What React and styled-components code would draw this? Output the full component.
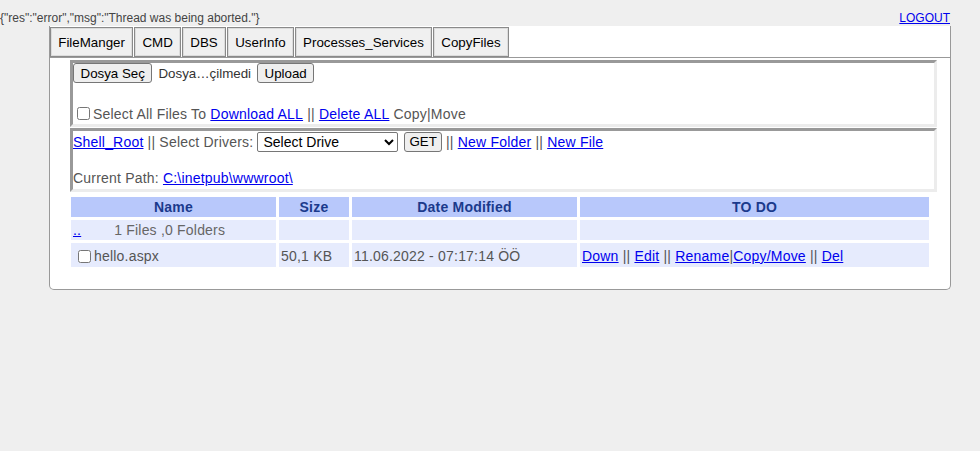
import React from "react";
import styled, { createGlobalStyle } from "styled-components";

const GlobalStyle = createGlobalStyle`
  html, body {
    margin: 0;
    padding: 0;
    background: #efefef;
    font-family: "Liberation Sans", Arial, sans-serif;
    font-size: 14px;
    color: #555;
  }
  a {
    color: #0000ee;
  }
`;

const tabs = ["FileManger", "CMD", "DBS", "UserInfo", "Processes_Services", "CopyFiles"];

export default function App() {
  return (
    <>
      <GlobalStyle />
      <TopBar>
        <StatusText>{'{"res":"error","msg":"Thread was being aborted."}'}</StatusText>
        <a href="#">LOGOUT</a>
      </TopBar>
      <Panel>
        <TabBar>
          {tabs.map((t) => (
            <Tab key={t}>{t}</Tab>
          ))}
        </TabBar>
        <Content>
          <Section>
            <Line>
              <Button>Dosya Seç</Button>
              <FileName>Dosya…çilmedi</FileName>
              <Button>Upload</Button>
            </Line>
            <Line $gap={20}>
              <input type="checkbox" />
              Select All Files To&nbsp;<a href="#">Download ALL</a>&nbsp;||&nbsp;
              <a href="#">Delete ALL</a>&nbsp;Copy|Move
            </Line>
          </Section>
          <Section $short>
            <Line>
              <a href="#">Shell_Root</a>&nbsp;|| Select Drivers:&nbsp;
              <DriveSelect defaultValue="">
                <option value="">Select Drive</option>
                <option>C:\</option>
              </DriveSelect>
              <Button $get>GET</Button>
              &nbsp;||&nbsp;<a href="#">New Folder</a>&nbsp;||&nbsp;<a href="#">New File</a>
            </Line>
            <Line $gap={15}>
              Current Path:&nbsp;<a href="#">C:\inetpub\wwwroot\</a>
            </Line>
          </Section>
          <FileTable>
            <colgroup>
              <col style={{ width: 205 }} />
              <col style={{ width: 70 }} />
              <col style={{ width: 225 }} />
              <col />
            </colgroup>
            <thead>
              <tr>
                <Th>Name</Th>
                <Th>Size</Th>
                <Th>Date Modified</Th>
                <Th>TO DO</Th>
              </tr>
            </thead>
            <tbody>
              <tr>
                <Td>
                  <a href="#">..</a>
                  <Counts>1 Files ,0 Folders</Counts>
                </Td>
                <Td />
                <Td />
                <Td />
              </tr>
              <tr>
                <Td $tall>
                  <RowCheck type="checkbox" />
                  hello.aspx
                </Td>
                <Td $tall>50,1 KB</Td>
                <Td $tall>11.06.2022 - 07:17:14 ÖÖ</Td>
                <Td $tall>
                  <a href="#">Down</a> || <a href="#">Edit</a> || <a href="#">Rename</a>|
                  <a href="#">Copy/Move</a> || <a href="#">Del</a>
                </Td>
              </tr>
            </tbody>
          </FileTable>
        </Content>
      </Panel>
    </>
  );
}

const TopBar = styled.div`
  display: flex;
  justify-content: space-between;
  align-items: flex-end;
  width: 950px;
  height: 26px;
  font-size: 12px;
  a {
    font-size: 12px;
    margin-bottom: 1px;
  }
`;

const StatusText = styled.span`
  color: #444;
  margin-bottom: 1px;
`;

const Panel = styled.div`
  margin-left: 49px;
  width: 900px;
  background: #fff;
  border: 1px solid #999;
  border-top: none;
  border-radius: 0 0 5px 5px;
  padding-bottom: 19px;
`;

const TabBar = styled.div`
  display: flex;
  gap: 1px;
  padding-top: 1px;
  border-bottom: 1px solid #999;
`;

const Tab = styled.button`
  height: 30px;
  padding: 0 7.25px;
  font-family: inherit;
  font-size: 13.33px;
  color: #000;
  background: #f0f0f0;
  border: 1px solid #8a8a8a;
  box-shadow: inset 0 0 0 1px #dcdcdc;
  border-radius: 0;
`;

const Content = styled.div`
  padding: 2px 13px 0 20px;
  letter-spacing: 0.2px;
`;

const Section = styled.div`
  display: flex;
  flex-direction: column;
  height: ${(p) => (p.$short ? 58 : 61)}px;
  margin-top: ${(p) => (p.$short ? 1 : 0)}px;
  border: 3px solid;
  border-color: #999 #ececec #ececec #999;
`;

const Line = styled.div`
  display: flex;
  align-items: center;
  height: 21px;
  margin-top: ${(p) => p.$gap || 0}px;
  white-space: pre;
  input[type="checkbox"] {
    margin: 0 3px 0 4px;
    width: 13px;
    height: 13px;
  }
`;

const Button = styled.button`
  height: 20px;
  padding: 0 ${(p) => (p.$get ? 4 : 6.5)}px;
  margin-left: ${(p) => (p.$get ? 6 : 0)}px;
  font-family: inherit;
  font-size: 13.33px;
  letter-spacing: 0;
  color: #000;
  background: #efefef;
  border: 1px solid #767676;
  border-radius: 3px;
`;

const FileName = styled.span`
  color: #333;
  font-size: 13.33px;
  letter-spacing: 0;
  margin: 0 6px 0 6px;
`;

const DriveSelect = styled.select`
  width: 141px;
  height: 20px;
  font-family: inherit;
  font-size: 14px;
  letter-spacing: 0;
  color: #000;
  background: #fff;
  border: 1px solid #767676;
  border-radius: 2px;
  padding: 0 1px;
`;

const FileTable = styled.table`
  width: 864px;
  margin: 2px 0 0 -2px;
  border-collapse: separate;
  border-spacing: 3px;
  table-layout: fixed;
`;

const Th = styled.th`
  height: 20px;
  padding: 0;
  background: #b8c8fb;
  color: #1b3a8c;
  font-size: 14px;
  font-weight: bold;
  text-align: center;
`;

const Td = styled.td`
  height: ${(p) => (p.$tall ? 22 : 20)}px;
  padding: ${(p) => (p.$tall ? "2px 2px 0" : "0 2px")};
  background: #e6ebfd;
  color: #555;
  font-size: 14px;
  white-space: nowrap;
  vertical-align: middle;
`;

const Counts = styled.span`
  margin-left: 33px;
  color: #666;
`;

const RowCheck = styled.input`
  margin: 0 3px 0 5px;
  width: 13px;
  height: 13px;
  vertical-align: -2px;
`;
